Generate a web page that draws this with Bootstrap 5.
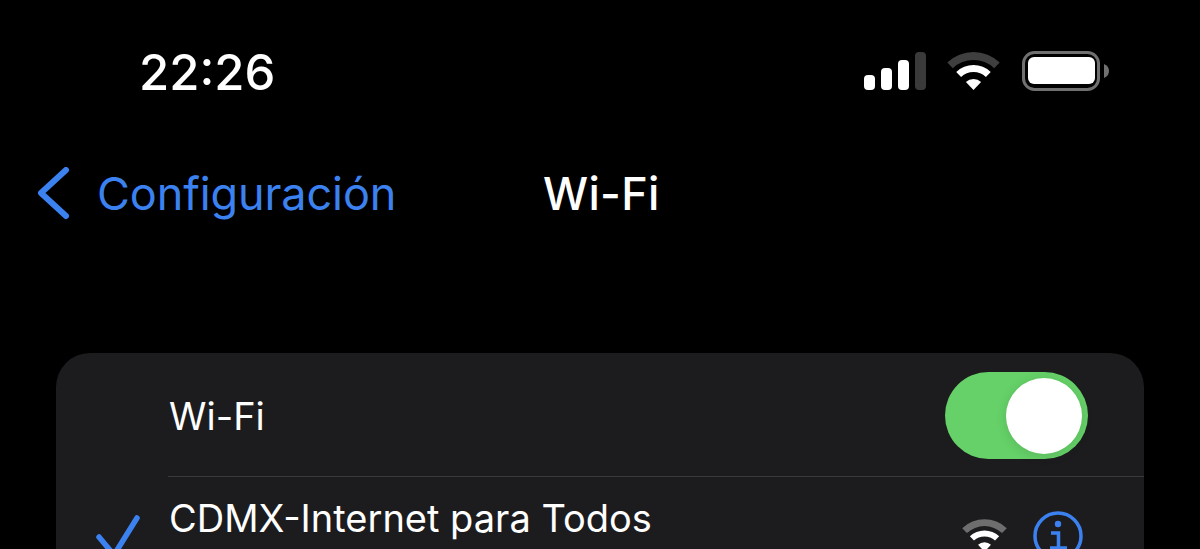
<!DOCTYPE html>
<html lang="es">

<head>
    <meta charset="UTF-8">
    <meta name="viewport" content="width=device-width, initial-scale=1.0">
    <title>Wi-Fi</title>
    <link rel="stylesheet" href="https://cdn.jsdelivr.net/npm/bootstrap@5.3.2/dist/css/bootstrap.min.css">
    <style>
        html, body { height: 549px; overflow: hidden; background: #000; }
        body { font-family: Inter, "Liberation Sans", sans-serif; color: #fff; }
        .status-row { height: 144px; padding: 44px 91px 0 139px; }
        .clock { font-size: 49px; font-weight: 500; line-height: 57px; }
        .status-icons { gap: 21px; padding-top: 7px; }
        .title-row { height: 100px; padding-left: 36px; }
        .back-link { color: #3b82f0; font-size: 45px; line-height: 56px; letter-spacing: -.1px; width: 507px; gap: 27px; text-decoration: none; }
        .page-title { font-size: 45px; font-weight: 500; line-height: 56px; letter-spacing: .3px; }
        .wifi-card { margin: 109px 56px 0; background: #1c1c1e; border-radius: 34px 34px 0 0; height: 196px; overflow: hidden; }
        .first-row { height: 124px; margin-left: 112px; padding: 2px 56px 0 1px; border-bottom: 1px solid #3a3a3c; }
        .row-label { font-size: 38px; line-height: 44px; }
        .ios-toggle { width: 143px; height: 87px; border-radius: 44px; background: #65d168; padding: 6px; }
        .ios-knob { width: 76px; height: 76px; border-radius: 50%; background: #fff; box-shadow: 0 2px 12px rgba(0, 0, 0, .12); }
        .net-row { padding: 19px 61px 0 40px; }
        .net-check { width: 73px; padding-top: 19px; }
        .net-name { font-size: 38px; line-height: 44px; }
        .net-sub { font-size: 30px; line-height: 36px; margin-top: 4px; }
        .net-icons { gap: 26px; margin-top: 15px; }
        .net-wifi { margin-top: 8px; }
    </style>
</head>

<body>
    <div class="status-row d-flex justify-content-between align-items-start">
        <div class="clock">22:26</div>
        <div class="status-icons d-flex align-items-center">
            <svg width="62" height="40" viewBox="0 0 62 40">
                <rect x="0" y="24" width="11" height="15" rx="4" fill="#fff" />
                <rect x="17" y="17" width="11" height="22" rx="4" fill="#fff" />
                <rect x="34" y="9" width="11" height="30" rx="4" fill="#fff" />
                <rect x="51" y="1" width="11" height="38" rx="4" fill="#3a3a3a" />
            </svg>
            <svg width="54" height="40" viewBox="0 -1 54 40">
                <path d="M.3 10.4 A38 38 0 0 1 52.7 10.4 L47.2 16.2 A30 30 0 0 0 5.8 16.2 Z" fill="#3f3f3f" />
                <path d="M9.25 19.9 A25 25 0 0 1 43.75 19.9 L38.9 25 A18 18 0 0 0 14.1 25 Z" fill="#fff" />
                <path d="M18.9 30 A11 11 0 0 1 34.1 30 L26.5 38 Z" fill="#fff" />
            </svg>
            <svg width="87" height="40" viewBox="0 0 87 40">
                <rect x="1.5" y="1.5" width="75" height="37" rx="11" fill="none" stroke="#707070" stroke-width="3" />
                <rect x="6" y="6" width="67" height="27" rx="6" fill="#fff" />
                <path d="M82 13 Q87 15 87 20 Q87 25 82 27 Z" fill="#707070" />
            </svg>
        </div>
    </div>

    <div class="title-row d-flex align-items-center">
        <a href="#" class="back-link d-flex align-items-center">
            <svg width="34" height="54" viewBox="0 0 34 54">
                <path d="M30 3 L5 26 L30 49" fill="none" stroke="#3b82f0" stroke-width="6" stroke-linecap="round" stroke-linejoin="round" />
            </svg>
            <span>Configuración</span>
        </a>
        <div class="page-title">Wi-Fi</div>
    </div>

    <div class="wifi-card">
        <div class="first-row d-flex justify-content-between align-items-center">
            <div class="row-label">Wi-Fi</div>
            <div class="ios-toggle d-flex justify-content-end align-items-center">
                <div class="ios-knob"></div>
            </div>
        </div>
        <div class="net-row d-flex">
            <div class="net-check">
                <svg width="44" height="44" viewBox="0 0 44 44">
                    <path d="M3 22 L18 40 L41 3" fill="none" stroke="#3b82f0" stroke-width="5.5" stroke-linecap="round" stroke-linejoin="round" />
                </svg>
            </div>
            <div class="flex-grow-1">
                <div class="net-name">CDMX-Internet para Todos</div>
                <div class="net-sub">Red no segura</div>
            </div>
            <div class="net-icons d-flex align-items-start">
                <svg class="net-wifi" width="45" height="33" viewBox="0 0 53 38">
                    <path d="M.3 10.4 A38 38 0 0 1 52.7 10.4 L47.2 16.2 A30 30 0 0 0 5.8 16.2 Z" fill="#6e6e6e" />
                    <path d="M9.25 19.9 A25 25 0 0 1 43.75 19.9 L38.9 25 A18 18 0 0 0 14.1 25 Z" fill="#fff" />
                    <path d="M18.9 30 A11 11 0 0 1 34.1 30 L26.5 38 Z" fill="#fff" />
                </svg>
                <svg width="50" height="50" viewBox="0 0 50 50">
                    <circle cx="25" cy="25" r="23" fill="none" stroke="#3b82f0" stroke-width="3.5" />
                    <circle cx="25" cy="13" r="3.2" fill="#3b82f0" />
                    <path d="M18 22 H25.5 V37 M17 37 H34" fill="none" stroke="#3b82f0" stroke-width="3.5" />
                </svg>
            </div>
        </div>
    </div>
    <script src="https://cdn.jsdelivr.net/npm/bootstrap@5.3.2/dist/js/bootstrap.bundle.min.js"></script>
</body>

</html>
